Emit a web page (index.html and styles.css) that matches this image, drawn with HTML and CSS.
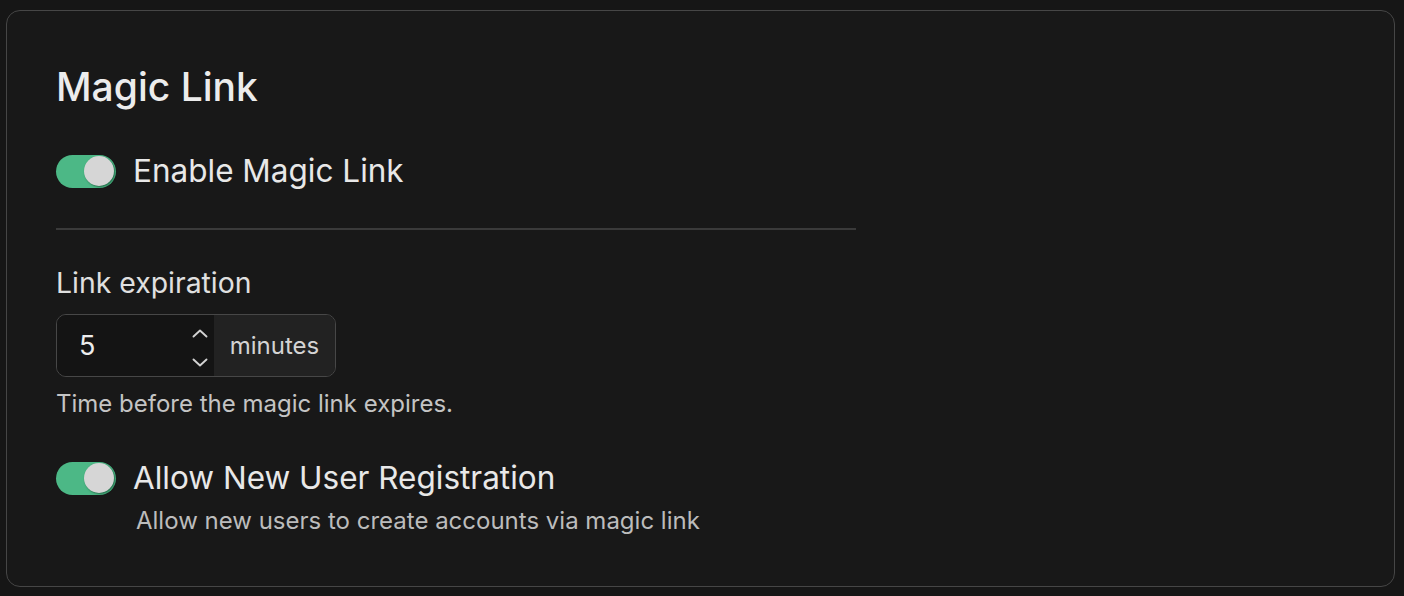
FILE: index.html
```html
<!DOCTYPE html>
<html lang="en">
<head>
<meta charset="utf-8">
<title>Magic Link</title>
<link rel="stylesheet" href="styles.css">
</head>
<body>
<section class="card">
  <h2 class="title">Magic Link</h2>
  <div class="toggle-row first">
    <span class="switch on"><span class="knob"></span></span>
    <span class="toggle-label">Enable Magic Link</span>
  </div>
  <div class="divider"></div>
  <div class="field">
    <div class="field-label">Link expiration</div>
    <div class="input-group">
      <div class="number-input">
        <span class="value">5</span>
        <span class="spinner">
          <svg width="16" height="9" viewBox="0 0 16 9"><path d="M1.5 7.5 L8 1.5 L14.5 7.5" fill="none" stroke="#d2d2d2" stroke-width="1.9" stroke-linecap="round" stroke-linejoin="round"/></svg>
          <svg width="16" height="9" viewBox="0 0 16 9"><path d="M1.5 1.5 L8 7.5 L14.5 1.5" fill="none" stroke="#d2d2d2" stroke-width="1.9" stroke-linecap="round" stroke-linejoin="round"/></svg>
        </span>
      </div>
      <div class="addon">minutes</div>
    </div>
    <div class="help">Time before the magic link expires.</div>
  </div>
  <div class="toggle-row second">
    <span class="switch on"><span class="knob"></span></span>
    <span class="toggle-label">Allow New User Registration</span>
  </div>
  <div class="toggle-desc">Allow new users to create accounts via magic link</div>
</section>
</body>
</html>
```
FILE: styles.css
```css
* { box-sizing: border-box; }
html, body { margin: 0; padding: 0; }
body {
  background: #161616;
  font-family: Inter, "Noto Sans", sans-serif;
  color: #ececec;
  padding: 10px 9px 9px 6px;
  height: 596px;
}
.card {
  height: 577px;
  background: #181818;
  border: 1px solid #464646;
  border-radius: 14px;
  padding: 52px 49px 0 49px;
}
.title {
  margin: 0;
  font-size: 39px;
  line-height: 48px;
  font-weight: 500;
  color: #ececec;
}
.toggle-row {
  display: flex;
  align-items: center;
  gap: 17px;
  height: 40px;
}
.toggle-row.first { margin-top: 40px; }
.toggle-row.second { margin-top: 40px; }
.switch {
  width: 60px;
  height: 33px;
  border-radius: 17px;
  background: #4cb886;
  display: flex;
  align-items: center;
  justify-content: flex-end;
  padding: 0 2px;
  flex: none;
}
.knob {
  width: 30px;
  height: 30px;
  border-radius: 50%;
  background: #d6d6d6;
  box-shadow: 1px 1px 2px rgba(0, 40, 20, 0.55);
}
.toggle-label {
  font-size: 31.5px;
  line-height: 40px;
  color: #e8e8e8;
}
.divider {
  width: 800px;
  height: 2px;
  background: #3a3a3a;
  margin-top: 37px;
}
.field { margin-top: 36px; }
.field-label {
  font-size: 28.4px;
  line-height: 34px;
  font-weight: 400;
  color: #e0e0e0;
}
.input-group {
  margin-top: 14px;
  display: flex;
  width: 280px;
  height: 63px;
  border: 1px solid #474747;
  border-radius: 10px;
  overflow: hidden;
}
.number-input {
  width: 157px;
  background: #141414;
  display: flex;
  align-items: center;
  justify-content: space-between;
  padding: 0 6px 0 22px;
}
.value {
  font-size: 27px;
  color: #ececec;
}
.spinner {
  display: flex;
  flex-direction: column;
  gap: 20px;
  padding-top: 5px;
}
.spinner svg { display: block; }
.addon {
  flex: 1;
  background: #222222;
  display: flex;
  align-items: center;
  justify-content: center;
  font-size: 24px;
  color: #d4d4d4;
}
.help {
  margin-top: 13px;
  font-size: 24px;
  line-height: 28px;
  color: #c4c4c4;
}
.toggle-desc {
  margin-top: 9px;
  padding-left: 80px;
  font-size: 24px;
  line-height: 28px;
  color: #bcbcbc;
}
```
